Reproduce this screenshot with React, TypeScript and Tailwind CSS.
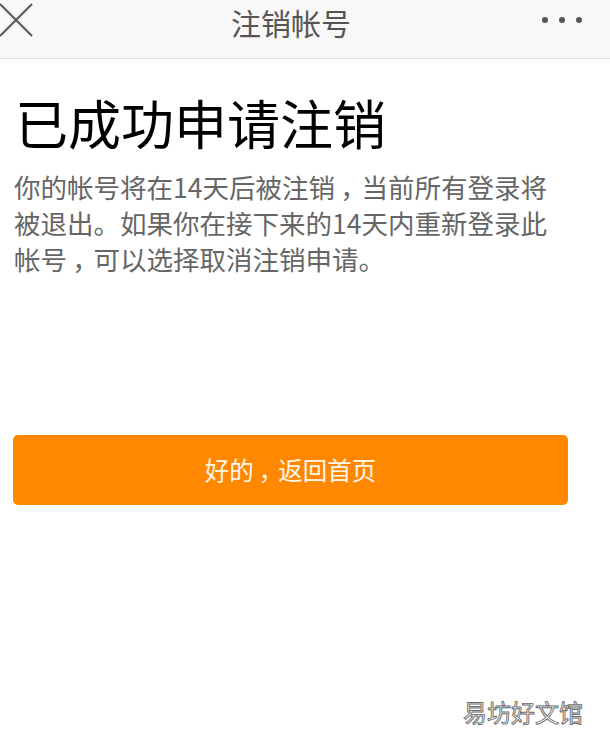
import React from "react";

function Comma() {
  return <span className="inline-block translate-x-[0.2em]">，</span>;
}

export default function App() {
  return (
    <div className="relative w-full h-[743px] bg-white overflow-hidden [font-family:'Noto_Sans_CJK_SC','Noto_Sans',sans-serif]">
      <header className="relative flex items-center justify-center h-[59px] bg-[#f8f8f8] border-b border-[#e2e2e2]">
        <svg className="absolute left-0 top-[3px]" width="34" height="34" viewBox="0 0 34 34">
          <path d="M0 1 L32 33 M32 1 L0 33" stroke="#5a5a5a" strokeWidth="2.2" fill="none" />
        </svg>
        <h1 className="text-[30px] leading-none text-[#555555] -mt-[15px] mr-[28px]">注销帐号</h1>
        <div className="absolute right-[28px] top-[17px] flex gap-[11px]">
          <span className="w-[6px] h-[6px] rounded-full bg-[#555555]" />
          <span className="w-[6px] h-[6px] rounded-full bg-[#555555]" />
          <span className="w-[6px] h-[6px] rounded-full bg-[#555555]" />
        </div>
      </header>

      <main className="px-[14px]">
        <h2 className="mt-[37px] ml-[1px] text-[53px] leading-none text-black font-normal">
          已成功申请注销
        </h2>
        <p className="mt-[20px] text-[26.5px] leading-[36px] text-[#666666] w-[545px]">
          你的帐号将在14天后被注销<Comma />当前所有登录将被退出。如果你在接下来的14天内重新登录此帐号<Comma />可以选择取消注销申请。
        </p>
        <button className="mt-[158px] w-[555px] h-[70px] -ml-[1px] rounded-[5px] bg-[#ff8800] text-[24.5px] text-[#fff6ea] flex items-center justify-center">
          好的<Comma />返回首页
        </button>
      </main>

      <div className="absolute right-[27px] bottom-[19px] text-[24px] leading-none text-white [-webkit-text-stroke:0.9px_#6a6a6a]">
        易坊好文馆
      </div>
    </div>
  );
}
